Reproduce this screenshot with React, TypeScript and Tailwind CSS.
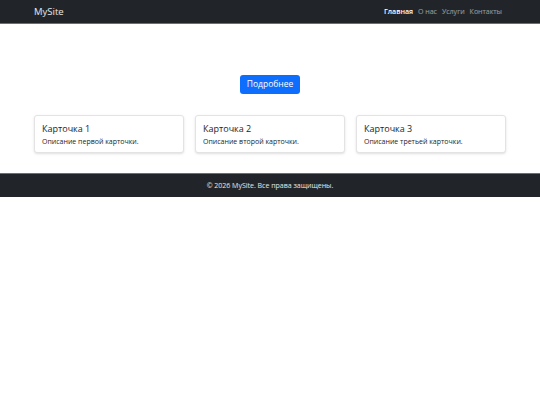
import * as React from "react";

const links = ["Главная", "О нас", "Услуги", "Контакты"];

const cards = [
  { title: "Карточка 1", text: "Описание первой карточки." },
  { title: "Карточка 2", text: "Описание второй карточки." },
  { title: "Карточка 3", text: "Описание третьей карточки." },
];

export default function App() {
  return (
    <div className="min-h-[405px] bg-white font-['Open_Sans',sans-serif]">
      <nav className="h-[24px] bg-[#212529] border-b border-[#6c6f72]">
        <div className="flex h-full items-center justify-between pl-[34px] pr-[38px]">
          <a href="#" className="text-[9.5px] leading-none text-white/90">
            MySite
          </a>
          <ul className="flex items-center gap-[5px] text-[7px] leading-none">
            {links.map((l, i) => (
              <li key={l}>
                <a
                  href="#"
                  className={i === 0 ? "font-semibold text-white" : "text-white/55"}
                >
                  {l}
                </a>
              </li>
            ))}
          </ul>
        </div>
      </nav>

      <main className="px-[34px] pt-[51px] pb-[20px]">
        <div className="flex justify-center">
          <button className="h-[19px] w-[60px] rounded-[3px] bg-[#0d6efd] text-[8.5px] text-white">
            Подробнее
          </button>
        </div>
        <div className="mt-[21px] grid grid-cols-3 gap-[11px]">
          {cards.map((c) => (
            <div
              key={c.title}
              className="h-[38px] rounded-[3px] border border-[#e3e3e3] bg-white px-[7px] pt-[6px] shadow-sm"
            >
              <h5 className="text-[9px] leading-[14px] text-[#212529]">{c.title}</h5>
              <p className="text-[7px] leading-[12px] text-[#212529]">{c.text}</p>
            </div>
          ))}
        </div>
      </main>

      <footer className="h-[24px] bg-[#212529] border-t border-[#6c6f72] flex items-center justify-center">
        <p className="text-[7px] leading-none text-white/90">© 2026 MySite. Все права защищены.</p>
      </footer>
    </div>
  );
}
